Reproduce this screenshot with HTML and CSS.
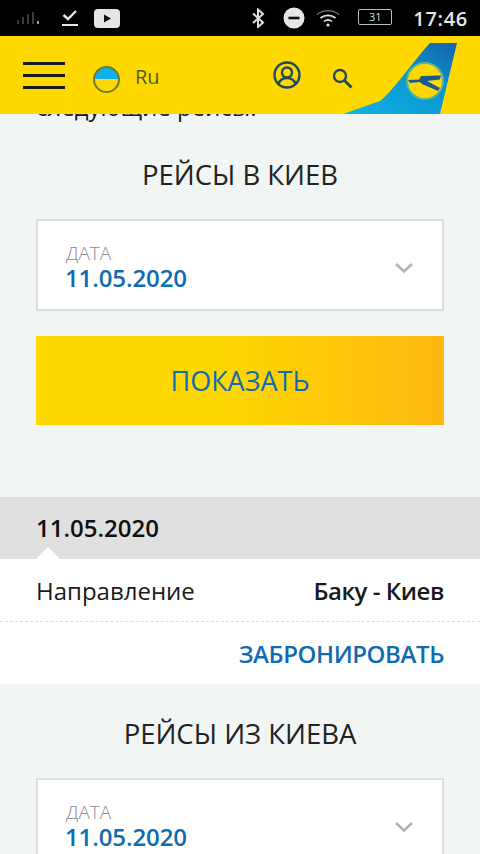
FILE: index.html
```html
<!DOCTYPE html>
<html lang="ru">
<head>
    <meta charset="UTF-8">
    <title>Рейсы</title>
    <link rel="stylesheet" href="styles.css">
</head>
<body>
    <div class="status-bar">
        <div class="status-left">
            <svg width="26" height="14" viewBox="0 0 26 14"><path d="M2 13V9M7 13V6M12 13V3M17 13V1" stroke="#777" stroke-width="1"/><path d="M22 13V10" stroke="#ddd" stroke-width="1.4"/></svg>
            <svg class="ic-check" width="18" height="18" viewBox="0 0 18 18"><path d="M2.5 6l4.5 4 8-8" fill="none" stroke="#e6e6e6" stroke-width="2.4"/><path d="M1 16h16" stroke="#e6e6e6" stroke-width="2"/></svg>
            <svg class="ic-play" width="26" height="19" viewBox="0 0 26 19"><rect width="26" height="19" rx="4" fill="#e6e6e6"/><path d="M10 5.5l7 4-7 4z" fill="#111"/></svg>
        </div>
        <div class="status-right">
            <svg width="14" height="20" viewBox="0 0 14 20"><path d="M2 5.5l10 9-5 4.500V1.500l5 4.500-10 9" fill="none" stroke="#ddd" stroke-width="2"/></svg>
            <svg class="ic-dnd" width="22" height="22" viewBox="0 0 22 22"><circle cx="11" cy="11" r="10.500" fill="#e6e6e6"/><path d="M5.500 11h11" stroke="#111" stroke-width="2.600"/></svg>
            <svg class="ic-wifi" width="24" height="18" viewBox="0 0 24 18"><path d="M1 5.500c6-5 16-5 22 0" fill="none" stroke="#666" stroke-width="1.400"/><path d="M4.500 9c4.500-3.500 10.500-3.500 15 0M8 12.500c2.500-2 5.500-2 8 0" fill="none" stroke="#e6e6e6" stroke-width="1.600"/><circle cx="12" cy="16" r="1.600" fill="#e6e6e6"/></svg>
            <div class="battery">31</div>
            <div class="clock">17:46</div>
        </div>
    </div>

    <header class="top-bar">
        <div class="burger"><span></span><span></span><span></span></div>
        <div class="flag"></div>
        <div class="lang">Ru</div>
        <svg class="ic-user" width="28" height="28" viewBox="0 0 28 28">
            <circle cx="14" cy="14" r="12.500" fill="none" stroke="#1f4a5c" stroke-width="2.400"/>
            <circle cx="14" cy="11.500" r="5" fill="none" stroke="#1f4a5c" stroke-width="2.400"/>
            <path d="M5.500 23c1.500-4.500 4.500-6 8.500-6s7 1.500 8.500 6" fill="none" stroke="#1f4a5c" stroke-width="2.400"/>
        </svg>
        <svg class="ic-search" width="21" height="21" viewBox="0 0 21 21">
            <circle cx="8" cy="8" r="6" fill="none" stroke="#1f4a5c" stroke-width="2.400"/>
            <path d="M12.500 12.500l7 7" stroke="#1f4a5c" stroke-width="2.800"/>
        </svg>
        <svg class="tail" width="114" height="72" viewBox="0 0 114 72">
            <defs>
                <linearGradient id="tailfill" x1="0" y1="1" x2="1" y2="0">
                    <stop offset="0" stop-color="#12b4e8"/>
                    <stop offset="0.6" stop-color="#0a94cf"/>
                    <stop offset="1" stop-color="#1760a8"/>
                </linearGradient>
            </defs>
            <path d="M0 72l37-13c12-9 32-38 50-58h27l-17 71z" fill="url(#tailfill)"/>
            <circle cx="82" cy="39" r="18" fill="#ffd800" stroke="#58b98c" stroke-width="2"/>
            <path d="M65 38l11-.5 2-3.500 20-.5-1 4-13 1.500 13 7-2 3-16-7-2-2-10 1z" fill="#1a5a90"/>
        </svg>
    </header>

    <main class="content">
        <p class="intro">следующие рейсы:</p>

        <h2 class="section-title">РЕЙСЫ В КИЕВ</h2>
        <div class="date-select">
            <div class="date-text">
                <div class="date-label">ДАТА</div>
                <div class="date-value">11.05.2020</div>
            </div>
            <svg class="chevron" width="20" height="12" viewBox="0 0 20 12"><path d="M2 2l8 7.500L18 2" fill="none" stroke="#b4b4b4" stroke-width="2.600"/></svg>
        </div>
        <button class="show-btn">ПОКАЗАТЬ</button>

        <div class="day-head">11.05.2020</div>
        <div class="flight">
            <div class="flight-row">
                <span class="flight-label">Направление</span>
                <span class="flight-route">Баку - Киев</span>
            </div>
            <div class="flight-action"><a class="book-link">ЗАБРОНИРОВАТЬ</a></div>
        </div>

        <h2 class="section-title second">РЕЙСЫ ИЗ КИЕВА</h2>
        <div class="date-select">
            <div class="date-text">
                <div class="date-label">ДАТА</div>
                <div class="date-value">11.05.2020</div>
            </div>
            <svg class="chevron" width="20" height="12" viewBox="0 0 20 12"><path d="M2 2l8 7.500L18 2" fill="none" stroke="#b4b4b4" stroke-width="2.600"/></svg>
        </div>
    </main>
</body>
</html>
```

FILE: styles.css
```css
html, body {
    margin: 0;
    padding: 0;
}

body {
    width: 480px;
    height: 854px;
    overflow: hidden;
    font-family: 'Open Sans', 'Noto Sans', sans-serif;
    background-color: #f1f5f4;
    color: #1a1a1a;
}

.status-bar {
    height: 36px;
    background-color: #000;
    display: flex;
    justify-content: space-between;
    align-items: center;
    padding: 0 12px 0 16px;
}

.status-left, .status-right {
    display: flex;
    align-items: center;
}

.ic-check {
    margin-left: 19px;
}

.ic-play {
    margin-left: 15px;
}

.ic-dnd {
    margin-left: 18px;
}

.ic-wifi {
    margin-left: 11px;
}

.battery {
    width: 32px;
    height: 14px;
    margin-left: 18px;
    margin-top: -3px;
    border: 1px solid #bbb;
    border-radius: 2px;
    color: #ddd;
    font-size: 11px;
    line-height: 14px;
    text-align: center;
}

.clock {
    margin-left: 21px;
    color: #e6e6e6;
    font-size: 20px;
    font-weight: 600;
    letter-spacing: 0.7px;
}

.top-bar {
    position: relative;
    z-index: 2;
    height: 78px;
    background-color: #ffd800;
    display: flex;
    align-items: center;
}

.burger {
    width: 42px;
    margin-left: 23px;
    display: flex;
    flex-direction: column;
    gap: 9px;
}

.burger span {
    display: block;
    height: 3px;
    background-color: #1a1a1a;
}

.flag {
    width: 23px;
    height: 23px;
    margin-left: 28px;
    margin-top: 8px;
    border: 2px solid #6b7a3a;
    border-radius: 50%;
    background: linear-gradient(to bottom, #0fb0ee 0%, #0fb0ee 50%, #ffd800 50%, #ffd800 100%);
}

.lang {
    margin-left: 15px;
    margin-top: 3px;
    color: #48602f;
    font-size: 20px;
}

.ic-user {
    margin-left: 113px;
}

.ic-search {
    margin-left: 31px;
    margin-top: 6px;
}

.tail {
    position: absolute;
    right: 23px;
    top: 6px;
}

.content {
    display: flex;
    flex-direction: column;
}

.intro {
    height: 24px;
    margin: -21px 0 0;
    padding: 0 36px;
    font-size: 24px;
    line-height: 28px;
}

.section-title {
    margin: 40px 0 0;
    font-size: 27.5px;
    line-height: 36px;
    font-weight: 400;
    text-align: center;
    color: #222;
}

.section-title.second {
    margin-top: 32px;
}

.date-select {
    height: 88px;
    margin: 26px 36px 0;
    padding: 0 28px;
    background-color: #fff;
    border: 2px solid #dcdfde;
    display: flex;
    justify-content: space-between;
    align-items: center;
}

.date-text {
    padding-top: 2px;
}

.date-label {
    color: #8c8c8c;
    font-size: 19px;
    font-weight: 300;
    line-height: 22px;
}

.date-value {
    color: #0f6cb0;
    font-size: 24px;
    line-height: 27px;
    font-weight: 600;
    letter-spacing: -0.1px;
    margin-left: -1px;
}

.chevron {
    margin-top: 6px;
}

.show-btn {
    height: 89px;
    margin: 25px 36px 0;
    border: none;
    background: linear-gradient(to right, #ffd800 0%, #ffd800 45%, #fdb813 100%);
    color: #0f6cb0;
    font-family: inherit;
    font-size: 27px;
}

.day-head {
    position: relative;
    height: 62px;
    margin-top: 72px;
    padding-left: 36px;
    background-color: #e0e0e0;
    color: #111;
    font-size: 24px;
    font-weight: 600;
    line-height: 62px;
}

.day-head::after {
    content: "";
    position: absolute;
    left: 36px;
    bottom: 0;
    border-left: 12px solid transparent;
    border-right: 12px solid transparent;
    border-bottom: 12px solid #fff;
}

.flight {
    background-color: #fff;
}

.flight-row {
    height: 62px;
    padding: 0 36px;
    border-bottom: 1px dashed #dcdcdc;
    display: flex;
    justify-content: space-between;
    align-items: center;
}

.flight-label {
    font-size: 24px;
}

.flight-route {
    font-size: 24px;
    font-weight: 600;
    letter-spacing: -0.45px;
}

.flight-action {
    height: 62px;
    padding: 0 36px;
    display: flex;
    justify-content: flex-end;
    align-items: center;
}

.book-link {
    color: #0f6cb0;
    font-size: 24px;
    font-weight: 600;
    letter-spacing: -0.4px;
}
```
